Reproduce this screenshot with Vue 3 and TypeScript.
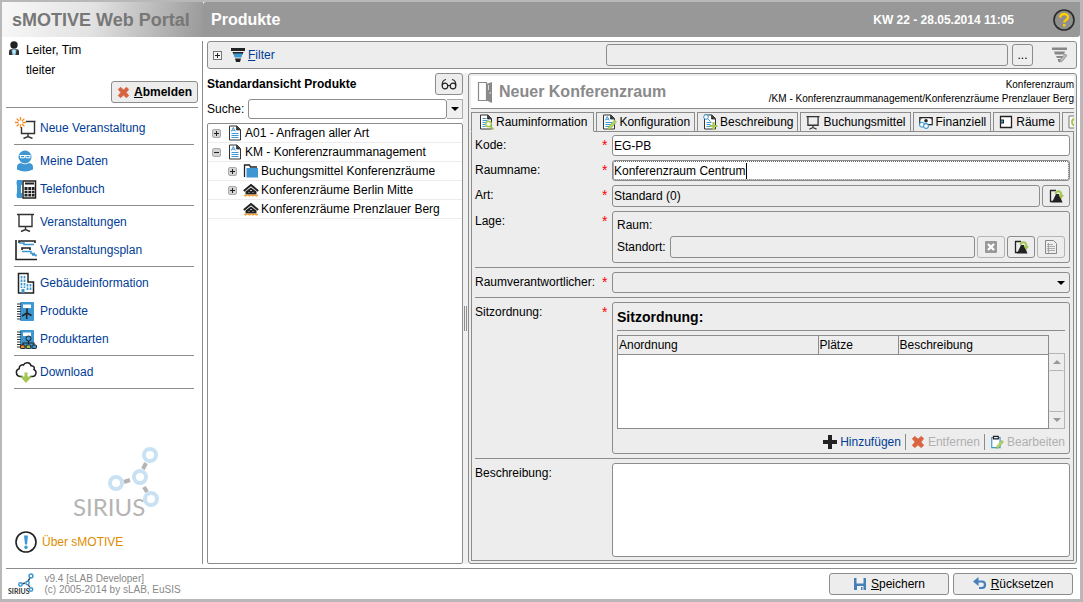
<script setup lang="ts">
import { h, ref, type FunctionalComponent } from 'vue'

interface Glyph { box: string; body: string }

const page = '<path d="M2.500 1h7.500l3.500 3.500V15h-11z" fill="#fff" stroke="#333"/><path d="M9.500 1v4h4" fill="#333" stroke="#333" stroke-width=".8"/>'
const lines = '<path d="M4.500 8.500h7M4.500 10.500h7M4.500 12.500h7" stroke="#3d97d3"/>'
const letter = '<path d="M4.300 6.500 6.300 2.500l2 4M5.200 5.300h2.300" fill="none" stroke="#3d97d3"/>'
const book = '<rect x="5" y="2" width="14" height="19" rx="1" fill="#3d97d3"/><rect x="8" y="4.500" width="8" height="3.500" fill="#fff"/><path d="M2 4h4M2 6.500h4M2 9h4M2 11.500h4M2 14h4M2 16.500h4M2 19h4" stroke="#333" stroke-width="1.200"/>'
const pencil = '<path d="m7.500 13 6-7 2 1.800-6 7-2.500.7z" fill="#b4d466" stroke="#8fb33c" stroke-width=".6"/>'
const board = '<path d="M2 3.500h17M4 4v11.500h13V4M10.500 16v2.500M6 20.500l4.500-2 4.500 2" fill="none" stroke="#333" stroke-width="1.400"/>'
const browse = '<path d="M2 2.500h6M2.500 2v11.500H5" fill="none" stroke="#222" stroke-width="1.300"/><path d="M4 14.500 8 6h3l3.500 8.500z" fill="#222"/><path d="M7.500 6C8 2.500 13 2 13.500 7" fill="none" stroke="#a4c653" stroke-width="2"/><path d="M10.500 7H16l-2.700 4z" fill="#a4c653"/>'
const cross = '<path d="m1.500 4 2.500-2.500L7.500 4.500 11 1.500 13.500 4l-3 3.500 3 3.500-2.500 2.500-3.500-3-3.500 3L1.500 11l3-3.500z" fill="#d9623f" stroke="#d9623f" stroke-linejoin="round"/>'

const glyphs: Record<string, Glyph> = {
  user: { box: '0 0 12 16', body: '<circle cx="6" cy="4" r="3.700" fill="#222"/><path d="M1 14V10.500q0-2.500 3-2.500h4q3 0 3 2.500V14z" fill="#333"/><path d="M3.500 8.500h5l-1 5.500h-3z" fill="#8fc9ea"/><path d="M5.500 8.500h1v4h-1z" fill="#fff"/>' },
  cross: { box: '0 0 15 15', body: cross },
  newEvent: { box: '0 0 22 22', body: '<path d="M11 4.500h9.500M19.500 5v11.500h-13V10M13 17v2.500M8.500 21.500l4.500-2 4.500 2" fill="none" stroke="#333" stroke-width="1.400"/><path d="M5.500 0v3.500M5.500 7.500V11M0 5.500h3.500M7.500 5.500H11M1.600 1.600 4 4M7 7l2.400 2.400M9.400 1.600 7 4M4 7 1.600 9.400" stroke="#f08a24" stroke-width="1.300"/>' },
  profile: { box: '0 0 22 22', body: '<circle cx="10" cy="7" r="6.500" fill="#3d97d3"/><path d="M2 19.500V17q0-3.500 4-4 4 2.500 8 0 4 .5 4 4v2.500q-8 4-16 0z" fill="#3d97d3"/><path d="M4.500 5.500h11" stroke="#fff"/><path d="M5.500 5.500h4v2.300h-4zM11 5.500h4v2.300h-4z" fill="none" stroke="#fff"/>' },
  phone: { box: '0 0 22 22', body: '<path d="M2 2h5v5H6v8h1v5H2q-1-3 0-6V8q-1-3 0-6z" fill="#3d97d3"/><path d="M8 3h12.500v17H8z" fill="#fff" stroke="#222" stroke-width="1.500"/><path d="M10 5.500h9" stroke="#222" stroke-width="2"/><path d="M9.500 9h3v3h-3zM13.300 9h3v3h-3zM17 9h2.500v3H17zM9.500 12.700h3v2.500h-3zM13.300 12.700h3v2.500h-3zM17 12.700h2.500v2.500H17zM9.500 16h3v2.500h-3zM13.300 16h3v2.500h-3zM17 16h2.500v2.500H17z" fill="#222"/>' },
  board: { box: '0 0 22 22', body: board },
  plan: { box: '0 0 22 22', body: '<path d="M1 1v19.500h21M4 4V2h16v2" fill="none" stroke="#222" stroke-width="1.600"/><path d="M4 4h5v1.500h10M11 12.500h5v2h4M17 16h4v1.500" fill="none" stroke="#3d97d3" stroke-width="1.500"/><path d="M7 11V9h8v2" fill="none" stroke="#222" stroke-width="1.600"/><path d="M7 12.500h4" stroke="#3d97d3" stroke-width="1.500"/>' },
  building: { box: '0 0 22 22', body: '<path d="M3.500 21V1.500h9.500V10h5.500v11z" fill="#fff" stroke="#222" stroke-width="1.500"/><path d="M6.500 4v12M9.500 4v12M12.500 12v7M15.500 12v7" stroke="#3d97d3" stroke-width="1.700" stroke-dasharray="2.500 1"/><path d="M6.500 17h3v4h-3z" fill="#3d97d3"/>' },
  product: { box: '0 0 22 22', body: book + '<path d="M12 13V8.500M12 13l4.500 2.500M12 13l-5 3M11.700 13v6" stroke="#222" stroke-width="1.500"/>' },
  productType: { box: '0 0 22 22', body: book + '<path d="M13.500 12v4M8 17v-2h11v2" fill="none" stroke="#222" stroke-width="1.200"/><circle cx="13.500" cy="10.500" r="2.500" fill="#3d97d3" stroke="#222"/><rect x="5.500" y="17" width="4.500" height="3.500" rx="1" fill="#f08a24" stroke="#222"/><rect x="11.200" y="17" width="4.500" height="3.500" rx="1" fill="#a4c653" stroke="#222"/><rect x="17" y="17" width="4.500" height="3.500" rx="1" fill="#3d97d3" stroke="#222"/>' },
  download: { box: '0 0 22 22', body: '<path d="M7.500 15.500H5a4 4 0 0 1-.8-7.800C4 4.500 7 3.500 8.500 4c1.500-3.500 7-3 7.500.8 3-.3 3.800 2.200 3 3.700 3.500 1.500 2 7-1.500 7H15" fill="none" stroke="#222" stroke-width="1.500"/><path d="M9.500 11.500h3v4H17L11 22l-6-6.500h4.500z" fill="#a4c653"/>' },
  about: { box: '0 0 22 22', body: '<circle cx="11" cy="11" r="10" fill="#fff" stroke="#222" stroke-width="1.600"/><path d="M9 4.500h4l-1 9h-2z" fill="#3d97d3"/><circle cx="11" cy="16.300" r="1.700" fill="#3d97d3"/>' },
  help: { box: '0 0 22 22', body: '<circle cx="11" cy="11" r="10" fill="#8e8e8e" stroke="#2b2b2b" stroke-width="1.600"/><path d="M7.300 8.700C7.300 3.800 15 4 15 8.200c0 2.800-3.800 2.800-3.800 5.300" fill="none" stroke="#fc0" stroke-width="2.400"/><path d="M10 15h2.500v2.500H10z" fill="#fc0"/>' },
  funnel: { box: '0 0 16 16', body: '<path d="M1 1h14v3H1z" fill="#222"/><path d="M2.500 5h11l-1 2.500h-9z" fill="#222"/><path d="m3.500 6.500 1 4h7l1-4z" fill="#3d97d3"/><path d="M5 11.500h6L10 15H6z" fill="#222"/>' },
  funnelEdit: { box: '0 0 18 18', body: '<path d="M1 1.500h15v2.500H1zM3 5.500h11l-1 3H4zM5 10h7l-1 2H6zM6.500 13h3v3h-2z" fill="#888"/><path d="m9 14 5-6 2 1.500-5 6-2.500.5z" fill="#bbb" stroke="#777" stroke-width=".6"/>' },
  glasses: { box: '0 0 16 14', body: '<circle cx="4" cy="9" r="2.800" fill="none" stroke="#222" stroke-width="1.200"/><circle cx="12" cy="9" r="2.800" fill="none" stroke="#222" stroke-width="1.200"/><path d="M6.800 8.500h2.400M1.200 8.500Q1 3 5 2.500M14.800 8.500Q15 3 11 2.500" fill="none" stroke="#222" stroke-width="1.200"/>' },
  doc: { box: '0 0 16 16', body: page + lines + letter },
  folder: { box: '0 0 16 16', body: '<path d="M1.500 14V2h5l1 2H14" fill="none" stroke="#222" stroke-width="1.300"/><path d="M3.500 5H15v9.500H3.500z" fill="#3d97d3"/>' },
  site: { box: '0 0 16 16', body: '<path d="M.8 9 8 3l7.200 6" fill="none" stroke="#222" stroke-width="2"/><path d="M2.500 12.500V9.500L8 5.500l5.500 4v3z" fill="#222"/><path d="M7 8.500h2M5.500 10.500h1M9.500 10.500h1" stroke="#bbb"/><path d="m1 13 1.500 1L4.500 13l2 1L8 13l2 1 1.700-1 1.800 1 1.500-1" fill="none" stroke="#f0a030" stroke-width="1.300"/>' },
  door: { box: '0 0 18 22', body: '<path d="M1.500 1.500h8v18h-8z" fill="#fff" stroke="#8a8a8a" stroke-width="1.200"/><path d="m9.500 3 5.500-2v21l-5.500-2.500z" fill="#8a8a8a"/><path d="M11.500 4v5M13 11v2" stroke="#ddd"/>' },
  tabInfo: { box: '0 0 16 16', body: page + '<path d="M4.500 4.500h4M4.500 6.500h5M4.500 8.500h3M4.500 10.500h3M4.500 12.500h3" stroke="#3d97d3"/><circle cx="10.500" cy="10" r="2.800" fill="#f2f8e4" stroke="#a4c653" stroke-width="1.400"/><path d="m12.500 12.500 3 3" stroke="#a4c653" stroke-width="1.800"/>' },
  tabConfig: { box: '0 0 16 16', body: page + lines + letter + pencil },
  tabDescribe: { box: '0 0 16 16', body: page + '<path d="M4.500 8.500h5M4.500 10.500h4M4.500 12.500h4" stroke="#3d97d3"/><circle cx="4" cy="3" r="2.300" fill="#fff" stroke="#3d97d3"/><path d="m5.500 4.500 3 3" stroke="#3d97d3"/><path d="M11.500 8v8M7.500 12h8" stroke="#a4c653" stroke-width="2.200"/>' },
  tabBoard: { box: '0 0 22 22', body: '<path d="M2 3.500h18M4 4v11.500h14V4M11 16v2.500M6 21l5-2.500 5 2.500" fill="none" stroke="#333" stroke-width="1.800"/>' },
  tabFinance: { box: '0 0 18 16', body: '<path d="M2 3h14v8H2z" fill="#fff" stroke="#222" stroke-width="1.300"/><path d="M2 5.500 4.500 3M13.500 3 16 5.500" stroke="#222"/><circle cx="9" cy="6.500" r="2" fill="#222"/><circle cx="4.500" cy="11" r="2.700" fill="#fff" stroke="#3d97d3" stroke-width="1.200"/><circle cx="9" cy="12.500" r="2.700" fill="#fff" stroke="#3d97d3" stroke-width="1.200"/>' },
  tabRoom: { box: '0 0 16 16', body: '<path d="M2.500 2.500h11v11h-11z" fill="#fff" stroke="#222" stroke-width="1.300"/><path d="M2 5.500h4v4H2z" fill="#222"/><path d="M3 6.500h2v2H3z" fill="#3d97d3"/>' },
  tabMore: { box: '0 0 16 16', body: '<path d="M2 2h12v12H2z" fill="#fff" stroke="#777"/><circle cx="9" cy="8" r="5" fill="#a4c653"/><path d="M6.500 8H11a2.200 2.200 0 1 0-.8 2" fill="none" stroke="#fff" stroke-width="1.200"/>' },
  browse: { box: '0 0 16 16', body: browse },
  clear: { box: '0 0 14 14', body: '<rect x="1" y="1" width="12" height="12" rx="1" fill="#999"/><path d="m4 4 6 6M10 4l-6 6" stroke="#fff" stroke-width="2.400"/>' },
  sheet: { box: '0 0 14 14', body: '<path d="M1.500.5h8l3 3v10h-11z" fill="#eee" stroke="#888"/><path d="M3 4.500h6M3 6.500h8M3 8.500h8M3 10.500h8M4.500 3v10" stroke="#999" stroke-width=".8"/>' },
  plus: { box: '0 0 14 14', body: '<path d="M5 0h4v5h5v4H9v5H5V9H0V5h5z" fill="#222"/>' },
  clipboard: { box: '0 0 16 16', body: '<path d="M2 3h9.500v11.500H2z" fill="#fff" stroke="#3d97d3" stroke-width="1.300"/><path d="M4 1.500h5.500V4.500H4z" fill="#eee" stroke="#222" stroke-width="1.300"/>' + pencil },
  save: { box: '0 0 14 14', body: '<path d="M1 1h12v12H1z" fill="#477fb8"/><path d="M3.500 1h7v5.500h-7zM4 9h6.500v4H4z" fill="#f2f2f2"/><path d="M8 10h1.500v3H8z" fill="#477fb8"/>' },
  undo: { box: '0 0 14 14', body: '<path d="M3 4.500h6q3 0 3 3.200T9 11H6" fill="none" stroke="#477fb8" stroke-width="2.200"/><path d="m0 4.500 5.500-4.500v9z" fill="#477fb8"/>' },
  nodes: { box: '0 0 54 62', body: '<g stroke="#b4b4b4" stroke-width="4"><path d="m19 35 6-2M38 22l3-6M39 40l3 5"/></g><g fill="#fff" stroke="#c9e2f3" stroke-width="4"><circle cx="11" cy="36" r="6"/><circle cx="35" cy="30" r="6"/><circle cx="45" cy="8" r="6"/><circle cx="46" cy="52" r="6"/></g>' },
  nodesSmall: { box: '0 0 18 20', body: '<path d="m5 11 3-1M11 8l2-3M11 12l2 2" stroke="#444" stroke-width="1.400"/><g fill="#fff" stroke="#3d97d3" stroke-width="1.500"><circle cx="3.500" cy="11.500" r="1.700"/><circle cx="10.500" cy="10" r="1.700"/><circle cx="14" cy="3" r="1.900"/><circle cx="14" cy="16.500" r="1.700"/></g>' },
}

const Glyph: FunctionalComponent<{ name: string }> = (props) =>
  h('svg', { viewBox: glyphs[props.name].box, innerHTML: glyphs[props.name].body, 'aria-hidden': 'true' })
Glyph.props = ['name']

const menu = [
  [{ icon: 'newEvent', text: 'Neue Veranstaltung' }],
  [{ icon: 'profile', text: 'Meine Daten' }, { icon: 'phone', text: 'Telefonbuch' }],
  [{ icon: 'board', text: 'Veranstaltungen' }, { icon: 'plan', text: 'Veranstaltungsplan' }],
  [
    { icon: 'building', text: 'Gebäudeinformation' },
    { icon: 'product', text: 'Produkte' },
    { icon: 'productType', text: 'Produktarten' },
  ],
  [{ icon: 'download', text: 'Download' }],
]

const tree = [
  { icon: 'doc', text: 'A01 - Anfragen aller Art', toggle: 'plus', child: false },
  { icon: 'doc', text: 'KM - Konferenzraummanagement', toggle: 'minus', child: false },
  { icon: 'folder', text: 'Buchungsmittel Konferenzräume', toggle: 'plus', child: true },
  { icon: 'site', text: 'Konferenzräume Berlin Mitte', toggle: 'plus', child: true },
  { icon: 'site', text: 'Konferenzräume Prenzlauer Berg', toggle: '', child: true },
]

const tabs = [
  { icon: 'tabInfo', text: 'Rauminformation' },
  { icon: 'tabConfig', text: 'Konfiguration' },
  { icon: 'tabDescribe', text: 'Beschreibung' },
  { icon: 'tabBoard', text: 'Buchungsmittel' },
  { icon: 'tabFinance', text: 'Finanziell' },
  { icon: 'tabRoom', text: 'Räume' },
  { icon: 'tabMore', text: '' },
]

const activeTab = ref(0)
const code = ref('EG-PB')
const roomName = ref('Konferenzraum Centrum')
const kind = ref('Standard (0)')
const description = ref('')
const search = ref('')
</script>

<template>
  <div class="window">
    <header class="top">
      <div class="brand">sMOTIVE Web Portal</div>
      <div class="bar">
        <h1>Produkte</h1>
        <span class="clock">KW 22 - 28.05.2014 11:05</span>
        <button class="plain help" type="button" aria-label="Hilfe"><Glyph name="help" /></button>
      </div>
    </header>

    <div class="body">
      <aside class="side">
        <div class="user">
          <Glyph name="user" />
          <div><div>Leiter, Tim</div><div>tleiter</div></div>
        </div>
        <button class="btn logout" type="button"><Glyph name="cross" /><span><u>A</u>bmelden</span></button>
        <nav>
          <ul v-for="(group, g) in menu" :key="g">
            <li v-for="item in group" :key="item.text">
              <a href="#"><Glyph :name="item.icon" />{{ item.text }}</a>
            </li>
          </ul>
        </nav>
        <div class="logo"><span>SIRIUS</span><Glyph name="nodes" /></div>
        <a class="about" href="#"><Glyph name="about" />Über sMOTIVE</a>
      </aside>

      <main>
        <section class="filter">
          <button class="toggle plus" type="button" aria-label="Filter öffnen"></button>
          <a class="filter-link" href="#"><Glyph name="funnel" /><span><u>F</u>ilter</span></a>
          <input class="field off" type="text" readonly aria-label="Filter" />
          <button class="btn dots" type="button">...</button>
          <button class="plain edit-filter" type="button" aria-label="Filter bearbeiten"><Glyph name="funnelEdit" /></button>
        </section>

        <div class="split">
          <section class="list">
            <div class="list-head">
              <h2>Standardansicht Produkte</h2>
              <button class="btn small" type="button" aria-label="Ansicht"><Glyph name="glasses" /></button>
            </div>
            <div class="search">
              <label for="search">Suche:</label>
              <input id="search" v-model="search" class="field" type="text" />
              <button class="drop" type="button" aria-label="Suchverlauf"><i class="down"></i></button>
            </div>
            <ul class="tree">
              <li v-for="row in tree" :key="row.text" :class="{ child: row.child }">
                <button v-if="row.toggle" class="toggle round" :class="row.toggle" type="button" :aria-label="row.text"></button>
                <span v-else class="gap"></span>
                <Glyph :name="row.icon" />{{ row.text }}
              </li>
            </ul>
          </section>

          <div class="grip"><i></i></div>

          <section class="detail">
            <div class="detail-head">
              <Glyph name="door" />
              <h2>Neuer Konferenzraum</h2>
              <div class="path"><div>Konferenzraum</div><div>/KM - Konferenzraummanagement/Konferenzräume Prenzlauer Berg</div></div>
            </div>
            <div class="tabs" role="tablist">
              <button
                v-for="(tab, t) in tabs"
                :key="tab.icon"
                type="button"
                role="tab"
                :class="{ on: t === activeTab }"
                :aria-selected="t === activeTab"
                :aria-label="tab.text || 'Weitere'"
                @click="activeTab = t"
              >
                <Glyph :name="tab.icon" />{{ tab.text }}
              </button>
            </div>

            <form class="form" @submit.prevent>
              <div class="row">
                <label for="code">Kode:</label><b>*</b>
                <input id="code" v-model="code" class="field" type="text" />
              </div>
              <div class="row">
                <label for="room">Raumname:</label><b>*</b>
                <div class="focus">
                  <input id="room" v-model="roomName" class="field" type="text" />
                  <i class="caret"></i>
                </div>
              </div>
              <div class="row">
                <label for="kind">Art:</label><b>*</b>
                <div class="with-btn">
                  <input id="kind" v-model="kind" class="field off" type="text" readonly />
                  <button class="btn small" type="button" aria-label="Art wählen"><Glyph name="browse" /></button>
                </div>
              </div>
              <div class="row">
                <span>Lage:</span><b>*</b>
                <div class="group place">
                  <div class="room">Raum:</div>
                  <div class="with-btn">
                    <label for="site">Standort:</label>
                    <input id="site" class="field off" type="text" readonly />
                    <button class="btn small dim" type="button" disabled aria-label="Leeren"><Glyph name="clear" /></button>
                    <button class="btn small" type="button" aria-label="Standort wählen"><Glyph name="browse" /></button>
                    <button class="btn small dim" type="button" disabled aria-label="Details"><Glyph name="sheet" /></button>
                  </div>
                </div>
              </div>
              <hr />
              <div class="row">
                <label for="owner">Raumverantwortlicher:</label><b>*</b>
                <div class="pick">
                  <select id="owner" class="field off"><option></option></select>
                  <i class="down"></i>
                </div>
              </div>
              <hr />
              <div class="row">
                <span>Sitzordnung:</span><b>*</b>
                <div class="group seats">
                  <h3>Sitzordnung:</h3>
                  <div class="grid">
                    <div class="sheet">
                      <table>
                        <thead><tr><th class="c1">Anordnung</th><th class="c2">Plätze</th><th>Beschreibung</th></tr></thead>
                        <tbody></tbody>
                      </table>
                    </div>
                    <div class="scroll"><span><i class="up"></i></span><span class="thumb"></span><span><i class="down"></i></span></div>
                  </div>
                  <div class="actions">
                    <button class="plain" type="button"><Glyph name="plus" />Hinzufügen</button>
                    <button class="plain" type="button" disabled><Glyph name="cross" />Entfernen</button>
                    <button class="plain" type="button" disabled><Glyph name="clipboard" />Bearbeiten</button>
                  </div>
                </div>
              </div>
              <hr />
              <div class="row fill">
                <label for="text">Beschreibung:</label><b></b>
                <textarea id="text" v-model="description" class="field"></textarea>
              </div>
            </form>
          </section>
        </div>
      </main>
    </div>

    <footer class="foot">
      <div class="mini"><span>SIRIUS</span><Glyph name="nodesSmall" /></div>
      <div class="version"><div>v9.4 [sLAB Developer]</div><div>(c) 2005-2014 by sLAB, EuSIS</div></div>
      <button class="btn wide" type="button"><Glyph name="save" /><span><u>S</u>peichern</span></button>
      <button class="btn wide" type="button"><Glyph name="undo" /><span><u>R</u>ücksetzen</span></button>
    </footer>
  </div>
</template>

<style>
body { margin: 0; }
</style>

<style scoped>
* { box-sizing: border-box; }
.window {
  min-height: 100vh;
  display: flex;
  flex-direction: column;
  border: 2px solid #b8b8b8;
  border-right-width: 3px;
  border-bottom-width: 3px;
  background: #fff;
  color: #000;
  font: 12px/14px "Liberation Sans", Arial, sans-serif;
}
button, input, select, textarea { font: inherit; color: inherit; margin: 0; }
h1, h2, h3, ul { margin: 0; padding: 0; list-style: none; }
svg { flex: none; display: block; }
a { color: #003c96; text-decoration: none; }
.plain { border: 0; background: none; padding: 0; display: flex; align-items: center; }
.field {
  border: 1px solid #8c8c8c;
  border-radius: 3px;
  background: #fff;
  padding: 0 1px;
  min-width: 0;
  width: 100%;
  height: 21px;
  outline: 0;
  display: block;
}
.off { background: #ededed; }
.btn {
  display: flex;
  align-items: center;
  justify-content: center;
  gap: 4px;
  height: 22px;
  padding: 0;
  border: 1px solid #8c8c8c;
  border-radius: 3px;
  background: #ededed;
}
.small { width: 28px; flex: none; }
.small svg { width: 16px; height: 16px; }
.dim { border-color: #b4b4b4; }
.dim svg { width: 14px; height: 14px; }
.down { border: 4px solid transparent; border-top-color: #000; border-bottom: 0; }
.up { border: 4px solid transparent; border-bottom-color: #999; border-top: 0; }

.top { display: flex; height: 35px; }
.brand {
  width: 201px;
  padding-left: 10px;
  font: bold 18px/36px "Liberation Sans", Arial, sans-serif;
  color: #777;
  background: linear-gradient(100deg, #f8f8f8, #e2e2e2 45%, #999);
}
.bar { flex: 1; display: flex; align-items: center; padding: 0 5px 0 8px; background: #989898; color: #fff; border-radius: 3px 0 3px 0; }
h1 { flex: 1; font-size: 16px; line-height: 18px; }
.clock { font-weight: bold; }
.help { margin-left: 39px; }
.help svg { width: 22px; height: 22px; }

.body { flex: 1; display: flex; padding: 4px 3px 4px 4px; }
.side { width: 197px; flex: none; border-right: 1px solid #8c8c8c; display: flex; flex-direction: column; }
.user { display: flex; gap: 6px; padding: 0 2px; line-height: 20px; margin-top: -1px; }
.user svg { width: 12px; height: 16px; margin-top: 1px; }
.logout { align-self: flex-end; width: 87px; margin: 1px 4px 4px 0; font-weight: bold; }
.logout svg { width: 13px; height: 13px; }
nav { border-top: 1px solid #8c8c8c; margin-right: 4px; padding: 6px 4px 0 8px; }
nav ul { padding-bottom: 2px; margin-bottom: 2px; border-bottom: 1px solid #8c8c8c; }
nav a { display: flex; align-items: center; gap: 3px; height: 28px; padding-left: 1px; }
nav svg, .about svg { width: 22px; height: 22px; }
.logo { margin: auto 0 12px 67px; display: flex; align-items: flex-end; color: #b4b4b4; height: 72px; }
.logo span { font: 24px/24px Lato, sans-serif; }
.logo svg { width: 54px; height: 62px; margin: 0 0 10px -40px; }
.about { display: flex; align-items: center; gap: 5px; margin: 0 0 11px 9px; color: #e08c00; }

main { flex: 1; min-width: 0; display: flex; flex-direction: column; gap: 4px; padding-left: 4px; }
.filter { display: flex; align-items: center; height: 28px; padding: 0 7px 0 5px; border: 1px solid #8c8c8c; border-radius: 3px; background: #ededed; }
.filter-link { display: flex; align-items: center; gap: 2px; margin-left: 8px; }
.filter-link svg { width: 16px; height: 16px; }
.filter .field { width: 47%; height: 22px; margin-left: auto; }
.dots { width: 21px; margin: 0 18px 0 4px; }
.edit-filter svg { width: 18px; height: 18px; }
.toggle { position: relative; width: 9px; height: 9px; padding: 0; flex: none; border: 1px solid #777; background: #f4f4f4; }
.round { border-radius: 2px; background: #d4d4d4; border-color: #aaa; }
.toggle::before, .toggle.plus::after { content: ""; position: absolute; background: #222; left: 1px; top: 3px; width: 5px; height: 1px; }
.toggle.plus::after { left: 3px; top: 1px; width: 1px; height: 5px; }

.split { flex: 1; display: flex; min-height: 0; }
.list { width: 256px; flex: none; display: flex; flex-direction: column; }
.list-head { display: flex; align-items: center; justify-content: space-between; }
.list-head h2 { font-size: 12px; line-height: 14px; }
.search { display: flex; align-items: center; margin: 4px 0; }
.search label { margin-right: 4px; }
.search .field { flex: 1; height: 20px; }
.drop { width: 16px; height: 20px; flex: none; display: grid; place-items: center; padding: 0; border: 1px solid #aaa; border-left: 0; background: #f0f0f0; }
.tree { flex: 1; border: 1px solid #8c8c8c; border-radius: 2px; }
.tree li { display: flex; align-items: center; height: 19px; padding-left: 4px; border-bottom: 1px solid #ececec; white-space: nowrap; }
.tree .child { padding-left: 20px; }
.tree svg { width: 16px; height: 16px; margin: 0 2px 0 6px; }
.gap { width: 9px; }
.grip { width: 5px; flex: none; display: flex; align-items: center; justify-content: center; background: #f0f0f0; }
.grip i { width: 3px; height: 25px; border: solid #8c8c8c; border-width: 0 1px; }

.detail { flex: 1; min-width: 0; display: flex; flex-direction: column; padding: 2px; border: 1px solid #8c8c8c; border-radius: 3px; background: #ededed; }
.detail-head { display: flex; align-items: center; gap: 4px; height: 33px; padding-left: 6px; background: #fff; border-bottom: 1px solid #8c8c8c; }
.detail-head svg { width: 18px; height: 22px; }
.detail-head h2 { flex: 1; font-size: 16px; line-height: 18px; color: #8a8a8a; white-space: nowrap; }
.path { text-align: right; font-size: 10px; line-height: 14px; white-space: nowrap; }
.tabs { display: flex; gap: 2px; margin-top: 3px; overflow: hidden; position: relative; z-index: 1; }
.tabs button { display: flex; flex: none; align-items: center; gap: 2px; height: 20px; padding: 0 4px; border: 1px solid #8c8c8c; background: #ededed; white-space: nowrap; }
.tabs .on { border-bottom-color: #ededed; padding: 0 6px; }
.tabs svg { width: 16px; height: 16px; }
.form { flex: 1; display: flex; flex-direction: column; gap: 4px; padding: 3px; margin-top: -1px; border: 1px solid #8c8c8c; }
.row { display: grid; grid-template-columns: 127px 10px 1fr; line-height: 20px; }
.row b { color: #f00; font-weight: normal; font-size: 14px; }
.form hr { width: 100%; margin: 0; border: 0; border-top: 1px solid #8c8c8c; }
.focus, .pick { position: relative; }
.focus .field { outline: 1px dotted #666; outline-offset: -2px; }
.caret { position: absolute; left: 134px; top: 3px; width: 1px; height: 16px; background: #000; }
.with-btn { display: flex; align-items: center; gap: 2px; }
.with-btn .field { height: 22px; flex: 1; }
.with-btn label { margin-right: 2px; }
.group { border: 1px solid #8c8c8c; border-radius: 3px; min-width: 0; }
.place { padding: 2px 4px 4px; }
.room { line-height: 22px; }
.pick select { appearance: none; }
.pick .down { position: absolute; right: 5px; top: 9px; }
.seats { padding: 5px 4px 3px; }
h3 { font-size: 14px; line-height: 18px; padding-bottom: 4px; border-bottom: 1px solid #8c8c8c; }
.grid { display: flex; margin-top: 4px; height: 94px; }
.sheet { flex: 1; border: 1px solid #8c8c8c; background: #fff; }
table { width: 100%; border-collapse: collapse; table-layout: fixed; background: #ededed; }
th { height: 18px; padding: 0 0 0 1px; line-height: 14px; font-weight: normal; text-align: left; border-bottom: 1px solid #8c8c8c; }
th + th { border-left: 1px solid #8c8c8c; }
.c1 { width: 200px; }
.c2 { width: 80px; }
.scroll { width: 16px; margin-top: 18px; display: flex; flex-direction: column; border: 1px solid #b4b4b4; border-left: 0; }
.scroll span { height: 16px; display: grid; place-items: center; }
.scroll .thumb { flex: 1; border: solid #b4b4b4; border-width: 1px 0; border-radius: 2px; }
.scroll .down { border-top-color: #999; }
.actions { display: flex; justify-content: flex-end; margin-top: 5px; }
.actions button { gap: 3px; height: 16px; color: #003c96; }
.actions button + button { margin-left: 4px; padding-left: 5px; border-left: 1px solid #8c8c8c; }
.actions button:disabled { color: #b0b0b0; }
.actions svg { width: 14px; height: 14px; }
.fill { flex: 1; }
textarea.field { height: 100%; resize: none; }

.foot { display: flex; align-items: center; gap: 4px; height: 31px; margin: 0 3px 0 4px; padding-right: 4px; border-top: 1px solid #8c8c8c; }
.mini { display: flex; align-items: flex-end; height: 22px; margin-left: 2px; font: bold 7px/8px Lato, sans-serif; color: #333; }
.mini svg { width: 18px; height: 20px; margin: 0 0 2px -13px; }
.version { flex: 1; margin-left: 6px; font-size: 10px; line-height: 11px; color: #888; }
.wide { width: 120px; }
.wide svg { width: 14px; height: 14px; }
</style>
